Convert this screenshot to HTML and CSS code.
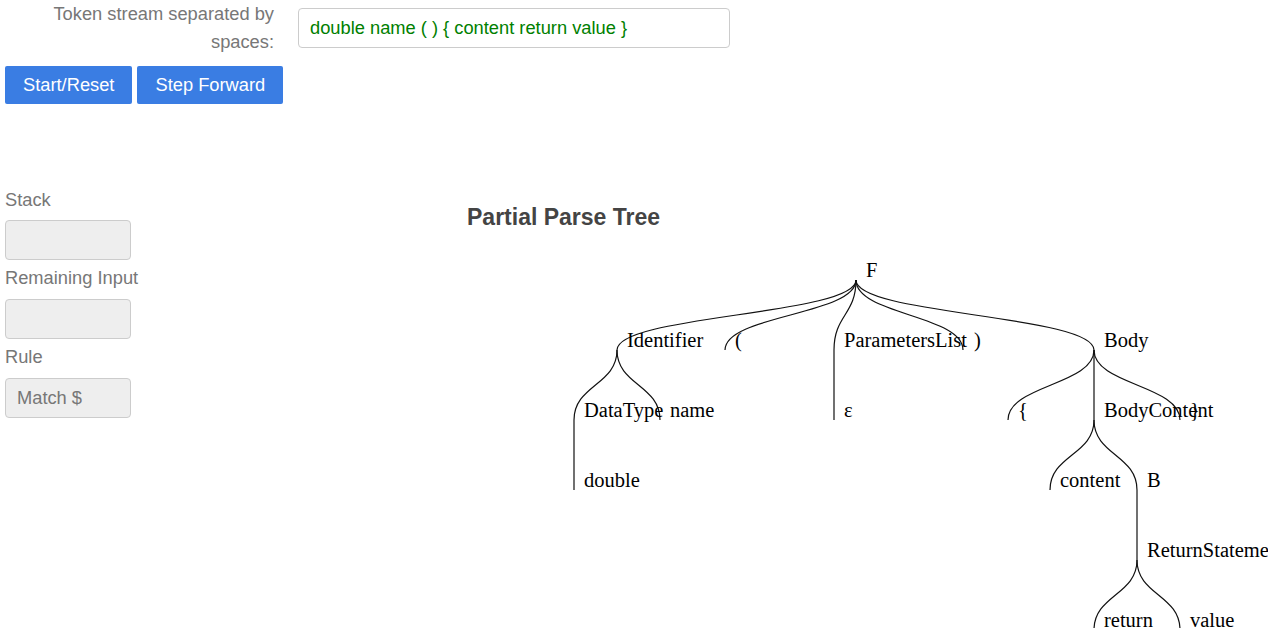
FILE: index.html
```html
<!DOCTYPE html>
<html>
<head>
<meta charset="utf-8">
<link rel="stylesheet" href="styles.css">
</head>
<body>
<div class="page">
  <div class="form-row">
    <label class="token-label" for="tokens">Token stream separated by spaces:</label>
    <input id="tokens" class="token-input" type="text" value="double name ( ) { content return value }">
  </div>
  <div class="buttons">
    <button class="btn">Start/Reset</button>
    <button class="btn">Step Forward</button>
  </div>
  <div class="main">
    <div class="side">
      <div class="side-label">Stack</div>
      <div class="side-box"></div>
      <div class="side-label">Remaining Input</div>
      <div class="side-box"></div>
      <div class="side-label">Rule</div>
      <div class="side-box">Match $</div>
    </div>
    <div class="tree-area">
      <h3 class="tree-title">Partial Parse Tree</h3>
      <svg class="tree" width="801" height="398" viewBox="0 0 801 398">
        <g class="links">
          <path d="M389,50 C389,85 150,85 150,120"/>
          <path d="M389,50 C389,85 258,85 258,120"/>
          <path d="M389,50 C389,85 367,85 367,120"/>
          <path d="M389,50 C389,85 496,85 496,120"/>
          <path d="M389,50 C389,85 627,85 627,120"/>
          <path d="M150,120 C150,155 107,155 107,190"/>
          <path d="M150,120 C150,155 193,155 193,190"/>
          <path d="M367,120 C367,155 367,155 367,190"/>
          <path d="M627,120 C627,155 541,155 541,190"/>
          <path d="M627,120 C627,155 627,155 627,190"/>
          <path d="M627,120 C627,155 713,155 713,190"/>
          <path d="M107,190 C107,225 107,225 107,260"/>
          <path d="M627,190 C627,225 583,225 583,260"/>
          <path d="M627,190 C627,225 670,225 670,260"/>
          <path d="M670,260 C670,295 670,295 670,330"/>
          <path d="M670,330 C670,365 627,365 627,400"/>
          <path d="M670,330 C670,365 713,365 713,400"/>
        </g>
        <g class="labels">
          <text x="399" y="47">F</text>
          <text x="160" y="117">Identifier</text>
          <text x="268" y="117">(</text>
          <text x="377" y="117">ParametersList</text>
          <text x="507" y="117">)</text>
          <text x="637" y="117">Body</text>
          <text x="117" y="187">DataType</text>
          <text x="203" y="187">name</text>
          <text x="377" y="187">ε</text>
          <text x="551" y="187">{</text>
          <text x="637" y="187">BodyContent</text>
          <text x="723" y="187">}</text>
          <text x="117" y="257">double</text>
          <text x="593" y="257">content</text>
          <text x="680" y="257">B</text>
          <text x="680" y="327">ReturnStatement</text>
          <text x="637" y="397">return</text>
          <text x="723" y="397">value</text>
        </g>
      </svg>
    </div>
  </div>
</div>
</body>
</html>
```
FILE: styles.css
```css
html, body {
  margin: 0;
  padding: 0;
  background: #fff;
}
body {
  font-family: "Liberation Sans", Arial, sans-serif;
  font-size: 18.3px;
  color: #333;
  overflow: hidden;
  height: 638px;
}
.page {
  padding: 0 5px;
}
.form-row {
  display: flex;
  align-items: center;
  height: 56px;
}
.token-label {
  width: 269px;
  text-align: right;
  line-height: 28px;
  color: #777;
  margin-right: 24px;
}
.token-input {
  box-sizing: border-box;
  width: 432px;
  height: 40px;
  border: 1px solid #ccc;
  border-radius: 4px;
  padding: 0 11px;
  font-family: "Liberation Sans", Arial, sans-serif;
  font-size: 18.3px;
  color: #008000;
  background: #fff;
  outline: none;
}
.buttons {
  display: flex;
  gap: 5px;
  margin-top: 10px;
}
.btn {
  height: 38px;
  border: none;
  border-radius: 2px;
  background: #3a7de3;
  color: #fff;
  font-family: "Liberation Sans", Arial, sans-serif;
  font-size: 18.3px;
  padding: 0 18px;
  cursor: pointer;
}
.main {
  display: flex;
  margin-top: 77px;
}
.side {
  width: 140px;
  flex: none;
}
.side-label {
  line-height: 26px;
  margin: 5px 0 8px;
  color: #777;
  white-space: nowrap;
}
.side-label:first-child {
  margin-top: 6px;
  margin-bottom: 7px;
}
.side-box {
  box-sizing: border-box;
  width: 126px;
  height: 40px;
  border: 1px solid #ccc;
  border-radius: 4px;
  background: #eee;
  color: #777;
  padding-left: 11px;
  line-height: 38px;
}
.tree-area {
  margin-left: 322px;
}
.tree-title {
  margin: 24px 0 0;
  font-size: 23px;
  line-height: 25px;
  font-weight: bold;
  color: #444;
}
.tree {
  display: block;
  overflow: hidden;
}
.links path {
  fill: none;
  stroke: #111;
  stroke-width: 1.2;
}
.labels text {
  font-family: "Liberation Serif", "Times New Roman", serif;
  font-size: 20.5px;
  fill: #000;
}
```
